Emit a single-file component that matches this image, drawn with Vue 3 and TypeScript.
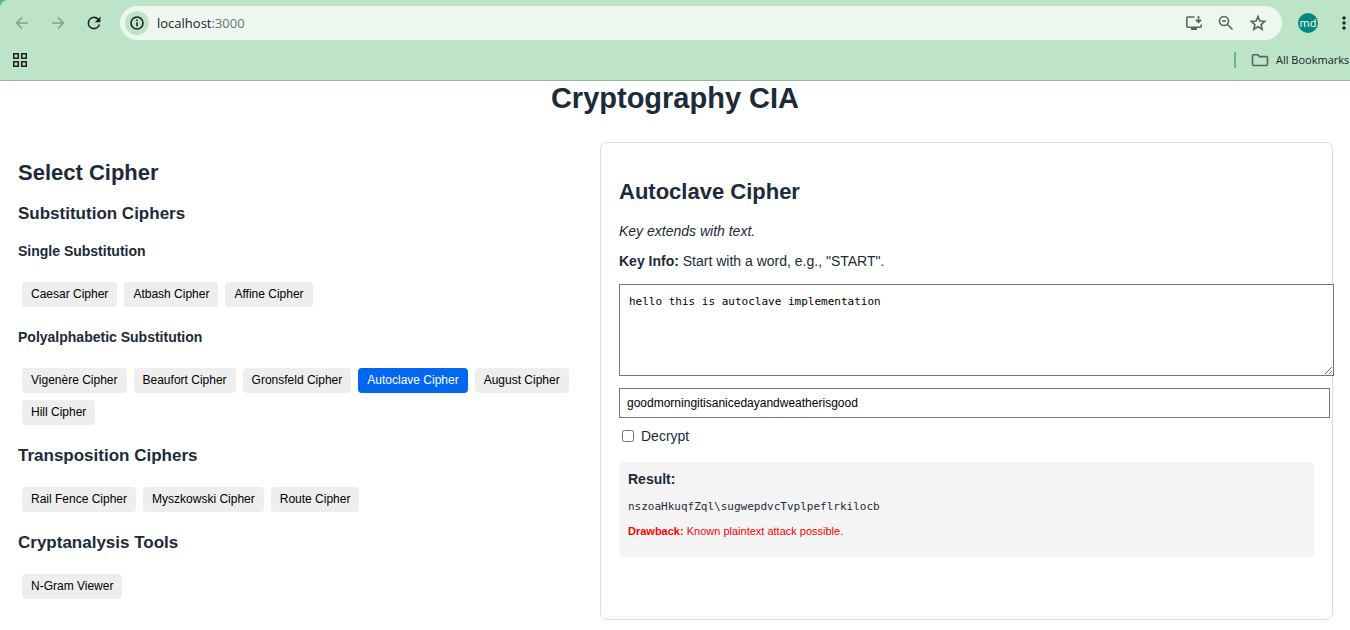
<script setup lang="ts">
import { ref } from 'vue'

interface CipherGroup {
  title: string
  level: 'h3' | 'h4'
  ciphers: string[]
}

const groups: CipherGroup[] = [
  { title: 'Single Substitution', level: 'h4', ciphers: ['Caesar Cipher', 'Atbash Cipher', 'Affine Cipher'] },
  {
    title: 'Polyalphabetic Substitution',
    level: 'h4',
    ciphers: ['Vigenère Cipher', 'Beaufort Cipher', 'Gronsfeld Cipher', 'Autoclave Cipher', 'August Cipher', 'Hill Cipher'],
  },
  { title: 'Transposition Ciphers', level: 'h3', ciphers: ['Rail Fence Cipher', 'Myszkowski Cipher', 'Route Cipher'] },
  { title: 'Cryptanalysis Tools', level: 'h3', ciphers: ['N-Gram Viewer'] },
]

const selected = ref('Autoclave Cipher')
const message = ref('hello this is autoclave implementation')
const cipherKey = ref('goodmorningitisanicedayandweatherisgood')
const decrypt = ref(false)
const result = 'nszoaHkuqfZql\\sugwepdvcTvplpeflrkilocb'
</script>

<template>
  <div class="window">
    <header class="browser">
      <div class="toolbar">
        <button class="nav faded" aria-label="Back">
          <svg width="16" height="16" viewBox="0 0 16 16"><path d="M14 8H3M8 2.5 2.5 8 8 13.5" /></svg>
        </button>
        <button class="nav faded" aria-label="Forward">
          <svg width="16" height="16" viewBox="0 0 16 16"><path d="M2 8h11M8 2.5 13.5 8 8 13.5" /></svg>
        </button>
        <button class="nav" aria-label="Reload">
          <svg width="16" height="16" viewBox="2 2 20 20">
            <path class="solid" d="M17.65 6.35A7.96 7.96 0 0 0 12 4a8 8 0 1 0 7.73 10h-2.08A6 6 0 1 1 12 6c1.66 0 3.14.69 4.22 1.78L13 11h7V4z" />
          </svg>
        </button>
        <div class="omnibox">
          <button class="info" aria-label="Site information">
            <svg width="16" height="16" viewBox="0 0 16 16">
              <circle cx="8" cy="8" r="6" />
              <path d="M8 7.2v4M8 4.6v1.5" />
            </svg>
          </button>
          <span class="url">localhost<span class="port">:3000</span></span>
          <button class="action" aria-label="Install app">
            <svg width="18" height="18" viewBox="0 0 18 18">
              <path d="M9.5 3H2.8Q1.8 3 1.8 4v8.2q0 1 1 1h12.4q1 0 1-1V10.5M13.5 2v6M10.8 5.7l2.7 2.7 2.7-2.7" />
              <path class="solid" d="M6 13h6v3H6z" />
            </svg>
          </button>
          <button class="action" aria-label="Zoom">
            <svg width="18" height="18" viewBox="0 0 18 18">
              <circle cx="7" cy="7" r="4.5" />
              <path d="M10.5 10.5 15.5 15.5M5 7h4" />
            </svg>
          </button>
          <button class="action" aria-label="Bookmark this page">
            <svg width="18" height="18" viewBox="0 0 18 18">
              <path d="M9 2.6 10.9 7l4.8.4-3.6 3.2 1.1 4.7L9 12.8l-4.2 2.5 1.1-4.7L2.3 7.4 7.1 7z" />
            </svg>
          </button>
        </div>
        <button class="avatar" aria-label="Profile">md</button>
        <button class="menu" aria-label="Menu">
          <svg width="12" height="18" viewBox="0 0 12 18">
            <circle cx="6" cy="4" r="1.7" /><circle cx="6" cy="9" r="1.7" /><circle cx="6" cy="14" r="1.7" />
          </svg>
        </button>
      </div>
      <div class="bookmarks">
        <button class="apps" aria-label="Apps">
          <svg width="14" height="14" viewBox="0 0 14 14">
            <path d="M.75.75h4.500v4.500H.75zM8.750.75h4.500v4.500h-4.500zM.75 8.750h4.500v4.500H.75zM8.750 8.750h4.500v4.500h-4.500z" />
          </svg>
        </button>
        <button class="all">
          <svg width="18" height="14" viewBox="0 0 18 14">
            <path d="M2.5 1.8h4.2l1.8 1.8h7q1 0 1 1v6.9q0 1-1 1h-13q-1 0-1-1V2.8q0-1 1-1z" />
          </svg>
          <span>All Bookmarks</span>
        </button>
      </div>
    </header>

    <main>
      <h1>Cryptography CIA</h1>
      <div class="columns">
        <section class="selector">
          <h2>Select Cipher</h2>
          <h3>Substitution Ciphers</h3>
          <template v-for="group in groups" :key="group.title">
            <component :is="group.level">{{ group.title }}</component>
            <div class="choices">
              <button
                v-for="name in group.ciphers"
                :key="name"
                class="choice"
                :class="{ active: name === selected }"
                @click="selected = name"
              >{{ name }}</button>
            </div>
          </template>
        </section>

        <section class="panel">
          <h2>{{ selected }}</h2>
          <p><em>Key extends with text.</em></p>
          <p><strong>Key Info:</strong> Start with a word, e.g., "START".</p>
          <textarea v-model="message" aria-label="Text" spellcheck="false"></textarea>
          <input v-model="cipherKey" class="key" type="text" aria-label="Key" spellcheck="false" />
          <label class="decrypt"><input v-model="decrypt" type="checkbox" />Decrypt</label>
          <div class="result">
            <strong>Result:</strong>
            <pre>{{ result }}</pre>
            <p class="drawback"><strong>Drawback:</strong> Known plaintext attack possible.</p>
          </div>
        </section>
      </div>
    </main>
  </div>
</template>

<style>
body {
  margin: 0;
  background: #fff;
}
</style>

<style scoped>
.window {
  overflow: hidden;
  background: linear-gradient(#52b87c, #52b87c) 0 0 / 10px 10px no-repeat;
  color: #1c2a39;
  font: 14px/18px "Liberation Sans", Arial, sans-serif;
}
button {
  margin: 0;
  padding: 0;
  border: 0;
  background: none;
  color: inherit;
  font: inherit;
  cursor: pointer;
}
svg {
  display: block;
  fill: none;
  stroke: currentColor;
  stroke-width: 1.6;
}
.solid {
  fill: currentColor;
  stroke: none;
}

/* Browser chrome */
.browser {
  border-bottom: 1px solid #93b9a0;
  border-top-left-radius: 8px;
  background: #bde4c9;
  color: #202124;
  font-family: "Open Sans", "Noto Sans", sans-serif;
}
.toolbar {
  display: flex;
  align-items: center;
  height: 46px;
  padding-left: 14px;
}
.nav {
  width: 16px;
  margin-right: 20px;
}
.nav:nth-child(3) {
  margin-right: 18px;
}
.faded {
  color: #83a08d;
}
.omnibox {
  display: flex;
  flex: 1;
  align-items: center;
  height: 34px;
  margin-right: 16px;
  padding: 0 15px 0 5px;
  border-radius: 17px;
  background: #edf7f0;
}
.info {
  display: grid;
  place-items: center;
  width: 24px;
  height: 24px;
  border-radius: 50%;
  background: #bde4c9;
}
.url {
  flex: 1;
  margin-left: 8px;
  font-size: 13px;
}
.port {
  color: #6b746e;
}
.action {
  margin-left: 14px;
  color: #5a625d;
}
.avatar {
  width: 20px;
  height: 20px;
  border-radius: 50%;
  background: #00897b;
  color: #fff;
  font-size: 11px;
  line-height: 18px;
}
.menu {
  margin-left: 20px;
}
.menu svg {
  fill: currentColor;
  stroke: none;
}
.bookmarks {
  display: flex;
  justify-content: space-between;
  align-items: center;
  height: 34px;
  padding: 0 0 6px 13px;
  box-sizing: border-box;
}
.all {
  display: flex;
  align-items: center;
  gap: 7px;
  width: 116px;
  height: 16px;
  padding-left: 15px;
  box-sizing: border-box;
  border-left: 2px solid #5fbf86;
  font-size: 11px;
  white-space: nowrap;
}
.all svg {
  flex: none;
  color: #5a625d;
}

/* Page */
h1,
h2,
h3,
h4,
p,
pre {
  margin: 0;
}
h1 {
  font-size: 29px;
  line-height: 34px;
  text-align: center;
}
.columns {
  display: grid;
  grid-template-columns: 573fr 733fr;
  gap: 9px;
  margin-top: 27px;
  padding: 0 17px 0 18px;
}
.selector {
  padding-top: 18px;
}
h2 {
  font-size: 22px;
  line-height: 26px;
}
h3 {
  margin-top: 18px;
  font-size: 17px;
  line-height: 19px;
}
h4 {
  margin-top: 19px;
  font-size: 14px;
  line-height: 18px;
}
.choices {
  display: flex;
  flex-wrap: wrap;
  gap: 7px;
  margin: 22px 0 21px;
  padding: 0 4px;
}
.choice {
  height: 25px;
  padding: 0 9px 2px;
  border-radius: 4px;
  background: #eee;
  color: #000;
  font-size: 12px;
  line-height: 14px;
}
.choice.active {
  background: #0067f0;
  color: #fff;
}
.panel {
  min-width: 0;
  padding: 36px 18px 18px;
  border: 1px solid #ddd;
  border-radius: 7px;
}
.panel > p {
  margin-top: 12px;
}
.panel > h2 + p {
  margin-top: 17px;
}
textarea,
.key {
  display: block;
  box-sizing: content-box;
  width: 100%;
  border: 1px solid #767676;
  border-radius: 0;
  background: #fff;
  color: #000;
}
textarea {
  height: 72px;
  margin: 14px 0 12px;
  padding: 10px 9px 8px;
  font: 11px/14px "DejaVu Sans Mono", monospace;
}
.key {
  height: 14px;
  padding: 7px;
  font: 12px/14px "Liberation Sans", Arial, sans-serif;
}
.decrypt {
  display: flex;
  align-items: center;
  width: fit-content;
  margin: 9px 0 17px;
}
.decrypt input {
  width: 12px;
  height: 12px;
  margin: 0 7px 0 3px;
}
.result {
  padding: 8px 9px 18px;
  border-radius: 5px;
  background: #f4f4f4;
}
pre {
  margin: 12px 0 9px;
  font: 11px/14px "DejaVu Sans Mono", monospace;
}
.result .drawback {
  color: #f00;
  font-size: 11px;
  line-height: 16px;
}
</style>
